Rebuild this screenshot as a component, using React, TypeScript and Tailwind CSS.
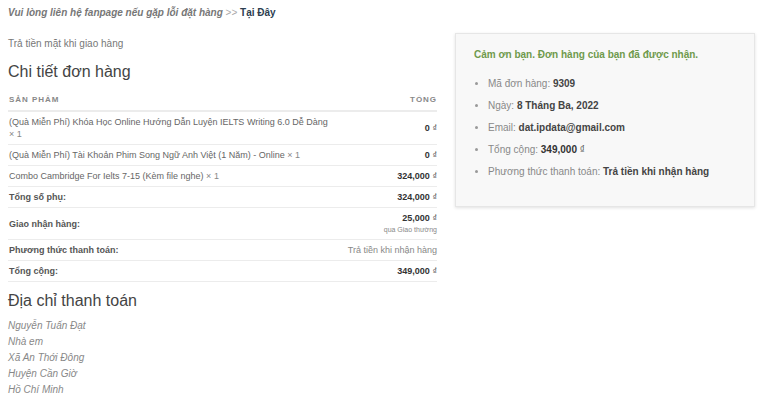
const items = [
  { name: "(Quà Miễn Phí) Khóa Học Online Hướng Dẫn Luyện IELTS Writing 6.0 Dễ Dàng", qty: 1, total: "0" },
  { name: "(Quà Miễn Phí) Tài Khoản Phim Song Ngữ Anh Việt (1 Năm) - Online", qty: 1, total: "0" },
  { name: "Combo Cambridge For Ielts 7-15 (Kèm file nghe)", qty: 1, total: "324,000" },
];

const address = ["Nguyễn Tuấn Đạt", "Nhà em", "Xã An Thới Đông", "Huyện Cần Giờ", "Hồ Chí Minh"];

function Price({ value }: { value: string }) {
  return (
    <span className="font-bold text-[#333]">
      {value}&nbsp;<span className="font-normal text-[#555]">₫</span>
    </span>
  );
}

export default function App() {
  return (
    <div className="min-h-[400px] bg-white px-2 pt-[6px] text-[#777] font-['Liberation_Sans',Arial,sans-serif]">
      {/* notice bar */}
      <p className="text-[10px] leading-[14px] font-bold italic text-[#777]">
        Vui lòng liên hệ fanpage nếu gặp lỗi đặt hàng <span className="font-normal not-italic text-[#aaa]">&gt;&gt;</span>{" "}
        <span className="not-italic text-[#2c3e50]">Tại Đây</span>
      </p>

      <div className="mt-[13px] flex items-start gap-[18px]">
        {/* order details */}
        <div className="w-[429px] pt-[5px]">
          <p className="text-[10px] leading-[12px]">Trả tiền mặt khi giao hàng</p>

          <h2 className="mt-[12px] text-[16px] leading-[20px] text-[#444]">Chi tiết đơn hàng</h2>

          <table className="mt-[8px] w-full border-collapse text-[9px] leading-[12px] text-[#666]">
            <thead>
              <tr className="border-b-2 border-[#ececec]">
                <th className="py-[4px] pl-px text-left text-[8px] font-bold tracking-[0.12em] text-[#888]">SẢN PHẨM</th>
                <th className="py-[4px] text-right text-[8px] font-bold tracking-[0.12em] text-[#888]">TỔNG</th>
              </tr>
            </thead>
            <tbody>
              {items.map((item) => (
                <tr key={item.name} className="border-b border-[#ececec]">
                  <td className="py-[4px] pl-px text-left align-middle">
                    <div className="max-w-[325px]">
                      {item.name} <span className="text-[#888]">×&nbsp;{item.qty}</span>
                    </div>
                  </td>
                  <td className="py-[4px] text-right align-middle">
                    <Price value={item.total} />
                  </td>
                </tr>
              ))}
              <tr className="border-b border-[#ececec]">
                <td className="py-[4px] pl-px font-bold text-[#555]">Tổng số phụ:</td>
                <td className="py-[4px] text-right">
                  <Price value="324,000" />
                </td>
              </tr>
              <tr className="border-b border-[#ececec]">
                <td className="py-[4px] pl-px font-bold text-[#555]">Giao nhận hàng:</td>
                <td className="py-[4px] text-right">
                  <div className="leading-[13px]">
                    <Price value="25,000" />
                  </div>
                  <div className="text-[7px] leading-[10px] text-[#888]">qua Giao thường</div>
                </td>
              </tr>
              <tr className="border-b border-[#ececec]">
                <td className="py-[4px] pl-px font-bold text-[#555]">Phương thức thanh toán:</td>
                <td className="py-[4px] text-right text-[#888]">Trả tiền khi nhận hàng</td>
              </tr>
              <tr className="border-b border-[#ececec]">
                <td className="py-[4px] pl-px font-bold text-[#555]">Tổng cộng:</td>
                <td className="py-[4px] text-right">
                  <Price value="349,000" />
                </td>
              </tr>
            </tbody>
          </table>

          <h2 className="mt-[9px] text-[16px] leading-[20px] text-[#444]">Địa chỉ thanh toán</h2>
          <address className="mt-[7px] text-[10px] leading-[16px] italic text-[#888]">
            {address.map((line) => (
              <div key={line}>{line}</div>
            ))}
          </address>
        </div>

        {/* thank-you box */}
        <div className="w-[300px] border border-[#e6e6e6] bg-[#f8f8f8] px-[18px] pt-[14px] pb-[27px] shadow-[0_1px_3px_rgba(0,0,0,0.12)]">
          <p className="text-[10px] leading-[14px] font-bold text-[#6f9a4c]">
            Cảm ơn bạn. Đơn hàng của bạn đã được nhận.
          </p>
          <ul className="mt-[15px] flex flex-col gap-[8px] pl-[14px] text-[10px] leading-[14px] text-[#888] list-disc marker:text-[#999]">
            <li>
              Mã đơn hàng: <strong className="text-[#444]">9309</strong>
            </li>
            <li>
              Ngày: <strong className="text-[#444]">8 Tháng Ba, 2022</strong>
            </li>
            <li>
              Email: <strong className="text-[#444]">dat.ipdata@gmail.com</strong>
            </li>
            <li>
              Tổng cộng: <Price value="349,000" />
            </li>
            <li>
              Phương thức thanh toán: <strong className="text-[#444]">Trả tiền khi nhận hàng</strong>
            </li>
          </ul>
        </div>
      </div>
    </div>
  );
}
